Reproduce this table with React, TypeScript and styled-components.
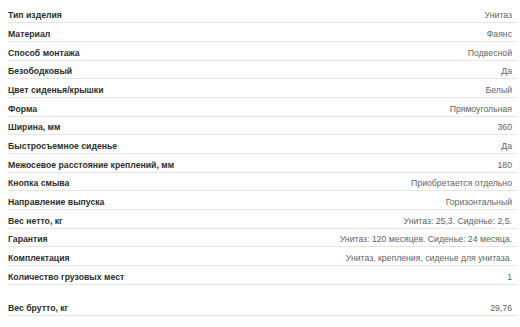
import styled, { createGlobalStyle } from 'styled-components';

const GlobalStyle = createGlobalStyle`
    html, body {
        margin: 0;
        padding: 0;
        background: #fff;
    }
    body {
        font-family: "Liberation Sans", Arial, sans-serif;
    }
`;

const Wrapper = styled.div`
    padding: 4.67px 3px 0 8px;
`;

const Group = styled.div<{ $gap?: boolean }>`
    display: flex;
    flex-direction: column;
    margin-top: ${p => (p.$gap ? '12.67px' : '0')};
`;

const Row = styled.div`
    display: flex;
    justify-content: space-between;
    align-items: center;
    box-sizing: border-box;
    height: 18.67px;
    padding: 5px 5px 0 0;
    border-bottom: 1px solid #e6e6e6;
    font-size: 8.7px;
    line-height: 11px;
`;

const Label = styled.div`
    font-weight: bold;
    color: #2e2e2e;
`;

const Value = styled.div`
    color: #636363;
    text-align: right;
`;

const specs: [string, string][] = [
    ['Тип изделия', 'Унитаз'],
    ['Материал', 'Фаянс'],
    ['Способ монтажа', 'Подвесной'],
    ['Безободковый', 'Да'],
    ['Цвет сиденья/крышки', 'Белый'],
    ['Форма', 'Прямоугольная'],
    ['Ширина, мм', '360'],
    ['Быстросъемное сиденье', 'Да'],
    ['Межосевое расстояние креплений, мм', '180'],
    ['Кнопка смыва', 'Приобретается отдельно'],
    ['Направление выпуска', 'Горизонтальный'],
    ['Вес нетто, кг', 'Унитаз: 25,3. Сиденье: 2,5.'],
    ['Гарантия', 'Унитаз: 120 месяцев. Сиденье: 24 месяца.'],
    ['Комплектация', 'Унитаз, крепления, сиденье для унитаза.'],
    ['Количество грузовых мест', '1'],
];

const shipping: [string, string][] = [['Вес брутто, кг', '29,76']];

export default function App() {
    return (
        <>
            <GlobalStyle />
            <Wrapper>
                <Group>
                    {specs.map(([label, value]) => (
                        <Row key={label}>
                            <Label>{label}</Label>
                            <Value>{value}</Value>
                        </Row>
                    ))}
                </Group>
                <Group $gap>
                    {shipping.map(([label, value]) => (
                        <Row key={label}>
                            <Label>{label}</Label>
                            <Value>{value}</Value>
                        </Row>
                    ))}
                </Group>
            </Wrapper>
        </>
    );
}
